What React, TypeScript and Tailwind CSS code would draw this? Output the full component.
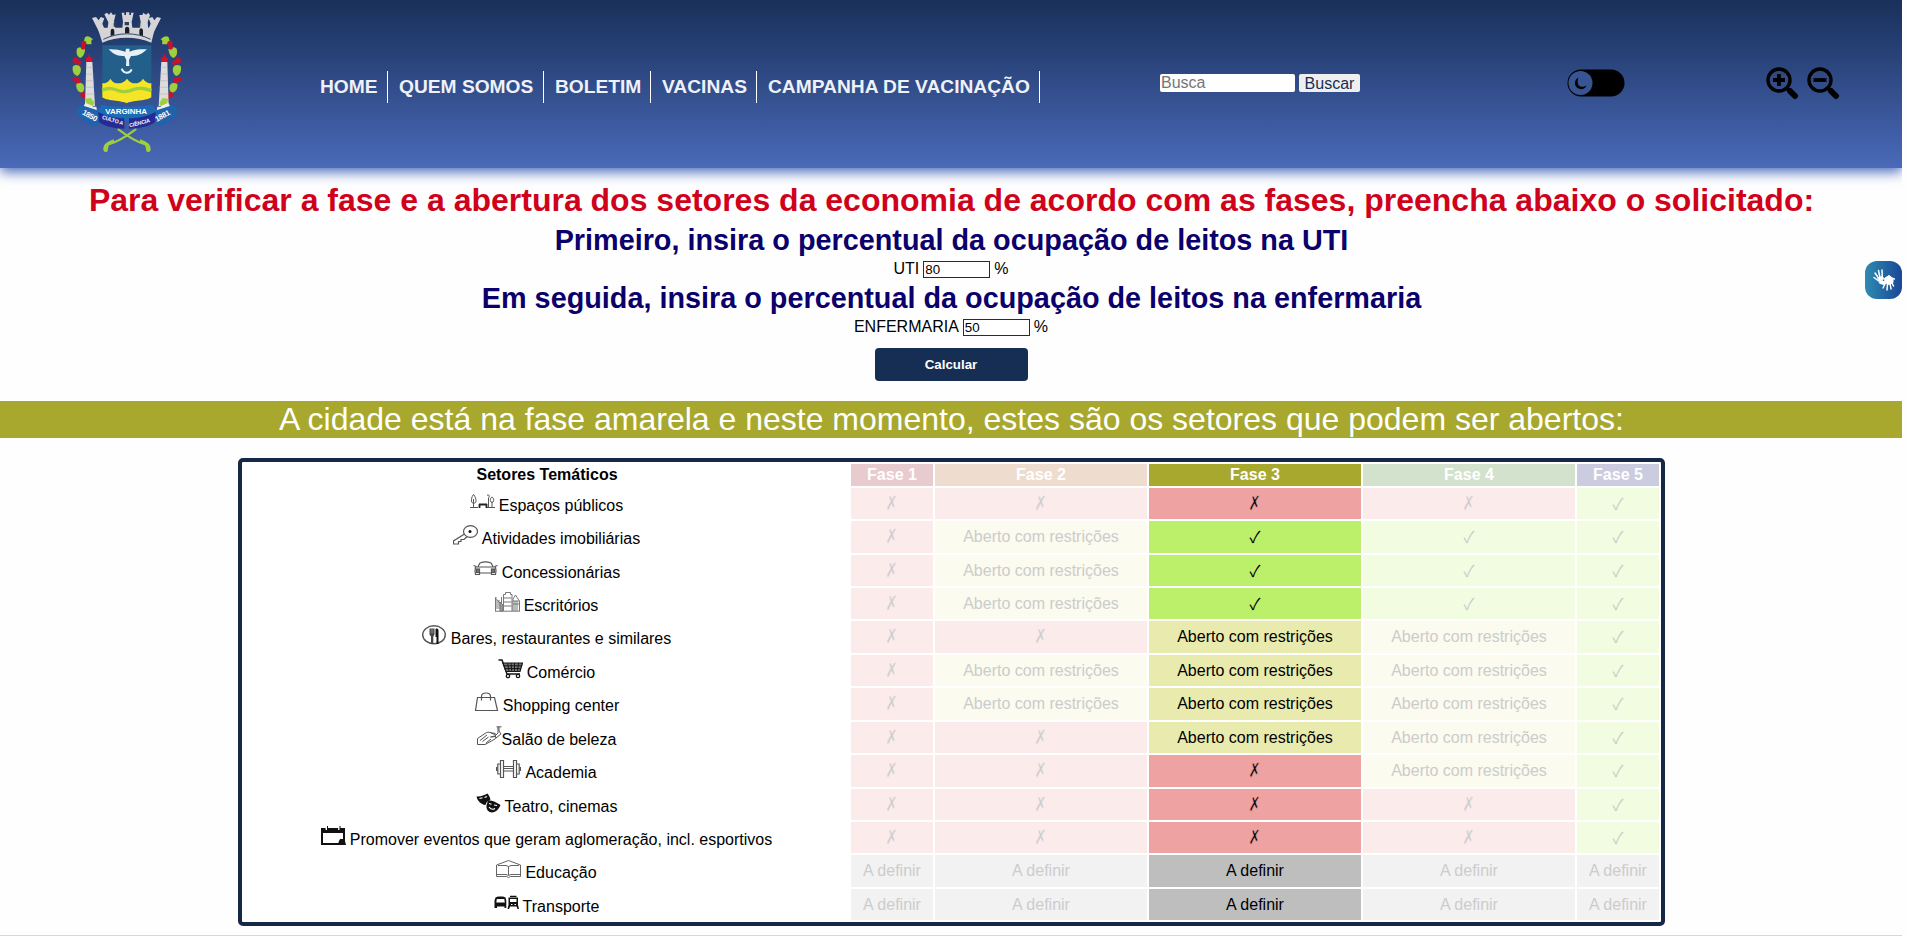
import React from "react";

type Mark = "x" | "v" | "r" | "d";

const NAV = [
  { label: "HOME", w: "w-[68px]" },
  { label: "QUEM SOMOS", w: "w-[145px]" },
  { label: "BOLETIM", w: "w-[96px]" },
  { label: "VACINAS", w: "w-[95px]" },
  { label: "CAMPANHA DE VACINAÇÃO", w: "w-[272px]" },
];

const line = { fill: "none", stroke: "#555", strokeWidth: 1 };

const icons: Record<string, React.ReactNode> = {
  park: (
    <g {...line}>
      <path d="M0 15.500H8M17 15.500H25" />
      <path d="M3.500 2.500C1.500 5 1.500 7 1.500 9c0 3 4.500 3 4.500 0C6 7 5.500 5 3.500 2.500ZM3.500 7v8.500" />
      <path d="M9 12.500h8M9.500 12v4M16.500 12v4" stroke="#222" strokeWidth="1.800" />
      <path d="M18.500 15V6M17 3.500c2-2 3 1 1.500 2.500M22 15.500v-6M22 5c-2 1-2.500 5 0 5.500 2.500-.5 2-4.500 0-5.500Z" />
    </g>
  ),
  key: (
    <g {...line}>
      <ellipse cx="17.500" cy="6.500" rx="7" ry="5.800" strokeWidth="1.200" />
      <path d="M11.500 9 .5 16v3h5v-2.500h2.500v-2l3 0 3-2.800" strokeWidth="1.200" />
      <circle cx="17" cy="6.500" r="1.500" fill="#111" stroke="none" />
    </g>
  ),
  car: (
    <g {...line} strokeWidth="1.200">
      <path d="M5 7.500 7 4C10 2.800 15 2.800 18 4L20 7.500M2.500 8h20M.5 6.500 3.500 7.500M24.500 6.500 21.500 7.500M2.500 8l-.5 4 .5 3.500h4v-1.500h12v1.500h4l.5-3.500-.5-4" />
      <rect x="3.500" y="10" width="3" height="3.500" fill="#777" />
      <rect x="18.500" y="10" width="3" height="3.500" fill="#777" />
    </g>
  ),
  office: (
    <g {...line} stroke="#777">
      <path d="M.5 19V5.500h1M2 8v9M4 8v9M8.500 19V2.500h2v-2h5v2h1.500V19M8.500 6h8M8.500 10h8M8.500 14h8M18 19V7l2.500-4L23 7l1.500 2v10M18 9h6M18 12h6M20 9v10M22 9v10M0 19.200h25M0 5.500l7 8M6.500 5v6" />
      <path d="M5 10l3 3v6H5Z" fill="#999" />
    </g>
  ),
  food: (
    <g>
      <ellipse cx="12" cy="9.800" rx="11.300" ry="9" fill="#fff" stroke="#555" strokeWidth="1.400" />
      <path d="M7.500 3.500h5v6l-1.200 2V19H9v-7.500l-1.500-2Z" fill="#444" />
      <path d="M13.500 4c2-1 3 0 3 2v13h-2v-7h-1Z" fill="#111" />
      <path d="M9.200 3.500v5M10.800 3.500v5" stroke="#aaa" strokeWidth=".6" />
    </g>
  ),
  cart: (
    <g fill="none" stroke="#161616">
      <path d="M.5 1h3.500l5 14h13" strokeWidth="1.500" />
      <path d="M5 4h19.500l-2.500 8.500H8Z" fill="#777" strokeWidth="1.200" />
      <path d="M6 6.800h18M7 9.600h16M9.500 4l1.500 8M13 4l.8 8M16.500 4v8M20.500 4l-1 8" />
      <circle cx="10" cy="17" r="1.700" strokeWidth="1.300" />
      <circle cx="20" cy="17" r="1.700" strokeWidth="1.300" />
    </g>
  ),
  bag: (
    <g {...line} strokeWidth="1.200">
      <path d="M3.500 5.500h17L23.500 18.500H1.500ZM7.500 8.500V4.500C7.500 2 9 1 12 1s4.500 1 4.500 3.500v4" />
    </g>
  ),
  salon: (
    <g {...line}>
      <path d="M.5 18.500v-6L8 7.500c2-1.500 4-1.500 5-1l5 1c1.500.5 1 2-.5 2.500l-4 1 5-.5c1.500.5.500 2-.5 2.500L8 18.500ZM3 14.500l7-5.500M5.500 15.500l6-4.500M9 17l5-4M14 7l4 1.500" />
      <path d="M19.500.8h5M22 1v4l2 3-5 4-1-2 3-3V1" />
    </g>
  ),
  gym: (
    <g {...line} strokeWidth="1.200">
      <path d="M4.500 1.500h3v17h-3ZM17.500 1.500h3v17h-3ZM1.800 5h2.700v10H1.800ZM20.500 5h2.700v10h-2.700ZM.5 8v4M24.500 8v4M7.500 7.500h10v4.500h-10ZM7.500 9.500h10" />
    </g>
  ),
  theatre: (
    <g fill="#111">
      <path d="M.5 3.500C4 4 9 2 11.500.5c2 2.500 3.500 6 2.500 7-2 0-4 2-4.500 4.500C5 11.500 1.500 8 .5 3.500Z" />
      <path d="M12 7.500c4-.5 8 1.500 12.500 4.500-1.500 4-4.500 7.300-8.500 7.500-3.500 0-6-3-5.500-7Z" />
      <path d="M3.500 5.500l3-.8M8.500 4.500l2.500-1M13 10.500l2.500.8M18 12l3 .5M13 14c2 2.500 4.500 2.500 6 1.500" stroke="#fff" strokeWidth="1.100" fill="none" />
    </g>
  ),
  event: (
    <g>
      <path d="M1 3h22v15H1Z" fill="#fff" stroke="#111" strokeWidth="2" />
      <path d="M0 2h24v5H0ZM17 18l1-3 1-2h4l1 2 1 4h-8Z" fill="#111" />
      <path d="M5.500 0v4M18 0v4" stroke="#fff" strokeWidth="1.800" />
      <path d="M6.500 0v4M19 0v4" stroke="#111" strokeWidth="1" />
    </g>
  ),
  book: (
    <g {...line} stroke="#666">
      <path d="M.5 6 12.500 1.500 24.500 6v11.500h-10l-2 1-2-1H.5ZM2 6.500h8l2.500 1 2.500-1h8M.5 15.500H10l2.500 1 2.500-1h9.500M12.500 7.500V16" />
    </g>
  ),
  bus: (
    <g>
      <path d="M1.500 4.500c.5-1.500 9.500-1.500 10 0l.8 3V15H10.500v-1.500H3V15H.5V7.500Z" fill="#111" />
      <path d="M2.800 6h7.500l.5 3.500h-8.500Z" fill="#fff" />
      <path d="M14.500 4.500h9.500V12l1 4h-1.500L22.500 13.500h-6.300L15 16h-1.500l1-4ZM16 2.800h6.500V4H16Z" fill="#111" />
      <path d="M16 6h6.500v3H16Z" fill="#fff" />
      <path d="M17 11.500h1.500M20.500 11.500H22" stroke="#fff" />
    </g>
  ),
};

const ROWS: { icon: string; label: string; marks: Mark[]; tight?: boolean }[] = [
  { icon: "park", label: "Espaços públicos", marks: ["x", "x", "x", "x", "v"] },
  { icon: "key", label: "Atividades imobiliárias", marks: ["x", "r", "v", "v", "v"] },
  { icon: "car", label: "Concessionárias", marks: ["x", "r", "v", "v", "v"] },
  { icon: "office", label: "Escritórios", marks: ["x", "r", "v", "v", "v"] },
  { icon: "food", label: "Bares, restaurantes e similares", marks: ["x", "x", "r", "r", "v"] },
  { icon: "cart", label: "Comércio", marks: ["x", "r", "r", "r", "v"] },
  { icon: "bag", label: "Shopping center", marks: ["x", "r", "r", "r", "v"] },
  { icon: "salon", label: "Salão de beleza", marks: ["x", "x", "r", "r", "v"], tight: true },
  { icon: "gym", label: "Academia", marks: ["x", "x", "x", "r", "v"] },
  { icon: "theatre", label: "Teatro, cinemas", marks: ["x", "x", "x", "x", "v"] },
  { icon: "event", label: "Promover eventos que geram aglomeração, incl. esportivos", marks: ["x", "x", "x", "x", "v"] },
  { icon: "book", label: "Educação", marks: ["d", "d", "d", "d", "d"] },
  { icon: "bus", label: "Transporte", marks: ["d", "d", "d", "d", "d"] },
];

const TEXT: Record<Mark, string> = { x: "✗", v: "✓", r: "Aberto com restrições", d: "A definir" };
const GLYPH: Record<Mark, string> = {
  x: "inline-block h-[31px] font-['DejaVu_Sans',sans-serif] leading-[32px] scale-x-95 scale-y-125",
  v: "inline-block h-[31px] font-['Noto_Sans_CJK_JP',sans-serif] leading-[31px]",
  r: "",
  d: "",
};
const ACTIVE: Record<Mark, string> = {
  x: "bg-[#efa2a2] [-webkit-text-stroke:0.5px_#efa2a2]",
  v: "bg-[#bdf06a]",
  r: "bg-[#e9ebae]",
  d: "bg-[#bebebe]",
};
const FADED: Record<Mark, string> = {
  x: "bg-[#fbebeb] [-webkit-text-stroke:0.4px_#fbebeb]",
  v: "bg-[#f1fce0]",
  r: "bg-[#fbfbef]",
  d: "bg-[#f2f2f2]",
};
const HEADS = ["bg-[#e8cbce]", "bg-[#eeddcf]", "bg-[#a8a82e]", "bg-[#d3e2cc]", "bg-[#cccce0]"];

function Crest() {
  const leaf = "#9fcf3c";
  const berry = "#c4122f";
  const wreath = (
    <g>
      <path d="M104 112c8-6 14-2 24 6-6 2-6 8-4 14-10 2-18 2-24-6Z" fill={leaf} />
      <path d="M80 146c8-6 20-6 24 2 0 10-4 22-14 26-8-4-14-12-10-28Z" fill={leaf} />
      <path d="M68 198c8-4 18-4 22 4 4 10 0 20-8 26-12-2-18-16-14-30Z" fill={leaf} />
      <path d="M78 252c8-6 18-4 22 4 4 10 0 18-4 22-12 0-20-10-18-26Z" fill={leaf} />
      <g fill={berry}>
        <circle cx="100" cy="130" r="8" /><circle cx="98" cy="142" r="7" />
        <circle cx="76" cy="182" r="9" /><circle cx="86" cy="188" r="7" />
        <circle cx="74" cy="238" r="8" /><circle cx="83" cy="242" r="8" />
        <circle cx="98" cy="284" r="8" /><circle cx="105" cy="291" r="6" />
      </g>
      <path d="M108 186h18l8 132h-30Z" fill="#dcdcdc" />
      <path d="M108 202h20M107 222h22M106 242h24M106 262h25M105 282h27" stroke="#bbb" strokeWidth="2" />
      <path d="M107 186v-14l5 2 5-14 4 14 6-2-2 14Z" fill="#d8102c" />
      <path d="M100 318l8-14 12 2 8 14 10 0 2 12-40 4Z" fill="#eee" />
      <path d="M106 296l16-2 10 14-4 10-20-8Z" fill={leaf} />
    </g>
  );
  return (
    <svg className="ml-5 mt-2.5 h-[144px] w-[114px] shrink-0" viewBox="59 30 342 432">
      <g fill="none" stroke={leaf} strokeLinecap="round">
        <path d="M256 388c-24 18-50 36-78 44" strokeWidth="6" />
        <path d="M204 388c24 18 50 36 78 44" strokeWidth="6" />
      </g>
      <path d="M192 424c-14 8-18 10-20 30-4 4-12 2-13-4 0-16 6-22 31-32ZM268 424c14 8 18 10 20 30 4 4 12 2 13-4 0-16-6-22-31-32Z" fill={leaf} />
      <g fill="#d5d5d8">
        <path d="M125 54l12-3 8 10 6-10 11 4-6 16 10 24-14 12Z" />
        <path d="M162 43l8-5 6 6 6-7 6 8 8-2-5 20 7 38h-28l4-34Z" />
        <path d="M214 38h8v7h5v-8h10v8h5v-7h8l-6 28 4 35h-34l4-35Z" />
        <path d="M267 45l9 0 3-7 8 6 7-6 5 8-7 20 3 38-28 0 4-39Z" />
        <path d="M332 54l-12-3-8 10-6-10-11 4 6 16-10 24 14 12Z" />
        <path d="M142 83l172 0-11 45c-44-20-104-20-147 0Z" />
      </g>
      <path d="M159 118c45-22 98-22 142 0" fill="none" stroke="#33486f" strokeWidth="3" />
      <path d="M181 108V94c0-10 11-10 11 0v10ZM224 100V88c0-10 13-10 13 0v12ZM267 104V92c0-10 11-10 11 0v16Z" fill="#1d1d26" />
      <path d="M190 68h7v12h-7ZM223 66h13v10h-13ZM262 68h7v12h-7Z" fill="#333c55" />
      <path d="M156 136h147v154c-8 10-62 10-74 20-12-10-66-10-73-20Z" fill="#22608b" />
      <path d="M156 250c12 0 18-4 24-14 8 12 14 14 24 14s18-4 26-14c8 10 14 14 24 14s18-4 24-14c8 10 14 14 25 14v42c-8 10-62 10-74 18-12-8-66-8-73-18Z" fill="#f5e526" />
      <path d="M156 270c22-8 34-4 48 2 18 6 30 2 46-4 20-6 34-2 53 4" fill="none" stroke="#9fcf3c" strokeWidth="10" />
      <path d="M175 148c18 0 38 2 50 8l2-10 10 0 1 9c16-7 34-8 52-7-12 12-28 22-48 20l-6 12 1 18h-10l1-18-6-12c-22 2-36-8-47-20Z" fill="#e8f0f5" />
      <path d="M214 206c6 16 24 16 30 2" fill="none" stroke="#e8f0f5" strokeWidth="6" />
      {wreath}
      <g transform="translate(459 0) scale(-1 1)">{wreath}</g>
      <path d="M80 328l10-14 56 18v38l-14 8c-22-8-40-20-52-36Z" fill="#1f62ae" />
      <path d="M380 328l-10-14-56 18v38l14 8c22-8 40-20 52-36Z" fill="#1f62ae" />
      <path d="M143 332l10-18c44 8 110 8 154 0l10 18-10 22c-52 14-104 14-156 0Z" fill="#1d6bb4" />
      <path d="M144 336c28 14 48 18 78 19v31c-28 0-58-6-76-20ZM316 336c-28 14-50 18-80 19v31c28 0 60-6 78-20Z" fill="#252b93" />
      <g fill="#fff" fontFamily="Liberation Sans, sans-serif" fontWeight="bold">
        <text x="165" y="342" fontSize="24" textLength="125">VARGINHA</text>
        <text transform="translate(94 342) rotate(29)" fontSize="23" textLength="48">1850</text>
        <text transform="translate(319 366) rotate(-29)" fontSize="23" textLength="48">1881</text>
        <text transform="translate(154 356) rotate(17)" fontSize="16" textLength="66">CULTO A</text>
        <text transform="translate(238 382) rotate(-14)" fontSize="16" textLength="64">CIÊNCIA</text>
      </g>
    </svg>
  );
}

function Magnifier({ plus }: { plus?: boolean }) {
  return (
    <svg className="h-[33px] w-[33px]" viewBox="0 0 33 33">
      <circle cx="13" cy="13" r="11" fill="none" stroke="#000" strokeWidth="3.400" />
      <path d={plus ? "M7 13h12M13 7v12" : "M6.500 13h13"} stroke="#000" strokeWidth="3.800" />
      <path d="M20 20.500l3 3" stroke="#000" strokeWidth="3" />
      <path d="M24 24l5 5" stroke="#000" strokeWidth="6" strokeLinecap="round" />
    </svg>
  );
}

function Percent({ label, value }: { label: string; value: string }) {
  return (
    <div className="flex h-[18px] items-center justify-center gap-1 text-base leading-[18px]">
      <span>{label}</span>
      <input className="h-[17px] w-[67px] border border-[#162e54] bg-white pl-px text-[13.333px] leading-none outline-none" defaultValue={value} />
      <span>%</span>
    </div>
  );
}

export default function App() {
  return (
    <div className="h-[936px] w-[1906px] overflow-hidden bg-[#fefefe] font-['Liberation_Sans',Arial,sans-serif] text-black">
      <div className="relative flex h-[936px] w-[1902px] flex-col overflow-hidden">
        <header className="flex h-[168px] shrink-0 items-start bg-linear-to-b from-[#19305a] to-[#4a6aba] pl-[50px] shadow-[0_4px_12px_#4a6aba]">
          <Crest />
          <nav className="ml-[136px] mt-[71px] flex text-[19.2px] font-bold text-[#eef1f8]">
            {NAV.map((n, i) => (
              <a key={n.label} className={`${n.w} ${i ? "ml-[11px]" : ""} h-8 whitespace-nowrap border-r border-white leading-[31px]`}>
                {n.label}
              </a>
            ))}
          </nav>
          <form className="ml-[120px] mt-[74px] flex gap-1">
            <input className="h-[18px] w-[135px] rounded-xs bg-white pl-px text-base leading-[18px] outline-none placeholder:text-[#757575]" placeholder="Busca" />
            <button type="button" className="h-[18px] w-[61px] rounded-xs bg-[#efefef] text-base leading-[17px] text-[#162e54]">
              Buscar
            </button>
          </form>
          <svg className="ml-[207px] mt-[69px] h-7 w-[58px]" viewBox="0 0 58 28">
            <rect x=".5" y=".5" width="57" height="27" rx="13.500" />
            <circle cx="13.500" cy="14" r="12" fill="#365592" />
            <path d="M11.500 8.500c-3 8 2.500 11.500 8 8-1.500 4-6 4.500-9 2.500-4-3-3-8.500 1-10.500Z" />
          </svg>
          <div className="ml-[141px] mt-[67px] flex gap-2">
            <Magnifier plus />
            <Magnifier />
          </div>
        </header>

        <main className="flex flex-col items-center">
          <h1 className="mt-3.5 h-[38px] whitespace-nowrap pl-px text-[32px] font-bold leading-[37px] text-[#d0021b]">
            Para verificar a fase e a abertura dos setores da economia de acordo com as fases, preencha abaixo o solicitado:
          </h1>
          <h2 className="h-10 whitespace-nowrap pl-px text-[28.8px] font-bold leading-[40px] text-[#0b006b]">
            Primeiro, insira o percentual da ocupação de leitos na UTI
          </h2>
          <Percent label="UTI" value="80" />
          <h2 className="h-10 whitespace-nowrap pl-px text-[28.8px] font-bold leading-[40px] text-[#0b006b]">
            Em seguida, insira o percentual da ocupação de leitos na enfermaria
          </h2>
          <Percent label="ENFERMARIA" value="50" />
          <button className="mt-3 h-[33px] w-[153px] rounded bg-[#162e54] text-[13.333px] font-bold text-white">Calcular</button>
          <p className="mt-5 h-[37px] w-full whitespace-nowrap bg-[#a8a82e] pl-px text-center text-[32px] leading-[36px] text-white">
            A cidade está na fase amarela e neste momento, estes são os setores que podem ser abertos:
          </p>
          <section className="mt-5 grid h-[468px] w-[1427px] grid-cols-[605px_82px_212px_212px_212px_82px] grid-rows-[22px_31px_32px_31px_31px_32px_31px_32px_31px_32px_31px_31px_32px_31px] gap-0.5 rounded-[5px] border-4 border-[#162848] bg-white p-0.5 text-center text-base">
            <div className="pl-0.5 font-bold leading-[21px]">Setores Temáticos</div>
            {HEADS.map((h, i) => (
              <div key={h} className={`${h} pl-px font-bold leading-[21px] text-white`}>{`Fase ${i + 1}`}</div>
            ))}
            {ROWS.map((r) => (
              <React.Fragment key={r.label}>
                <div className={`flex items-start justify-center whitespace-nowrap pl-px ${r.tight ? "" : "gap-1"}`}>
                  <svg className="mt-1 h-5 w-[25px]" viewBox="0 0 25 20">
                    {icons[r.icon]}
                  </svg>
                  <span className="leading-[35px]">{r.label}</span>
                </div>
                {r.marks.map((m, i) => (
                  <div key={i} className={`${i === 2 ? ACTIVE[m] : FADED[m]} ${i === 2 ? "text-black" : "text-[#cccccc]"} h-full overflow-hidden pl-px leading-[31px]`}>
                    <span className={GLYPH[m]}>{TEXT[m]}</span>
                  </div>
                ))}
              </React.Fragment>
            ))}
          </section>
          <div className="mt-[9px] h-px w-full bg-[#d8d8d8]" />
        </main>

        <div className="absolute right-0 top-[261px] flex h-[38px] w-[37px] items-center justify-center rounded-xl bg-linear-to-r from-[#2f8bb0] to-[#1c4696]">
          <svg className="h-[24px] w-[22px]" viewBox="0 0 22 24" fill="none" stroke="#fff" strokeLinecap="round" strokeLinejoin="round">
            <path d="M2 5l3.500 5M5.500 2.500l1.500 7M9 2l.3 8M1 9.500l4 3" strokeWidth="1.500" />
            <path d="M5 10l4-1.500 2 2-2 2 3 2-1 2-4-1Z" fill="#fff" strokeWidth="1" />
            <path d="M12 10l4-2.500 4 3v4l-4 2-4-2Z" fill="#fff" strokeWidth="1" />
            <path d="M12.500 15l-2.500 5M14.500 16l-.5 6M17 15l1 6M18.500 14l2 4M20 10.500l1.500.500" strokeWidth="1.500" />
          </svg>
        </div>
      </div>
    </div>
  );
}
